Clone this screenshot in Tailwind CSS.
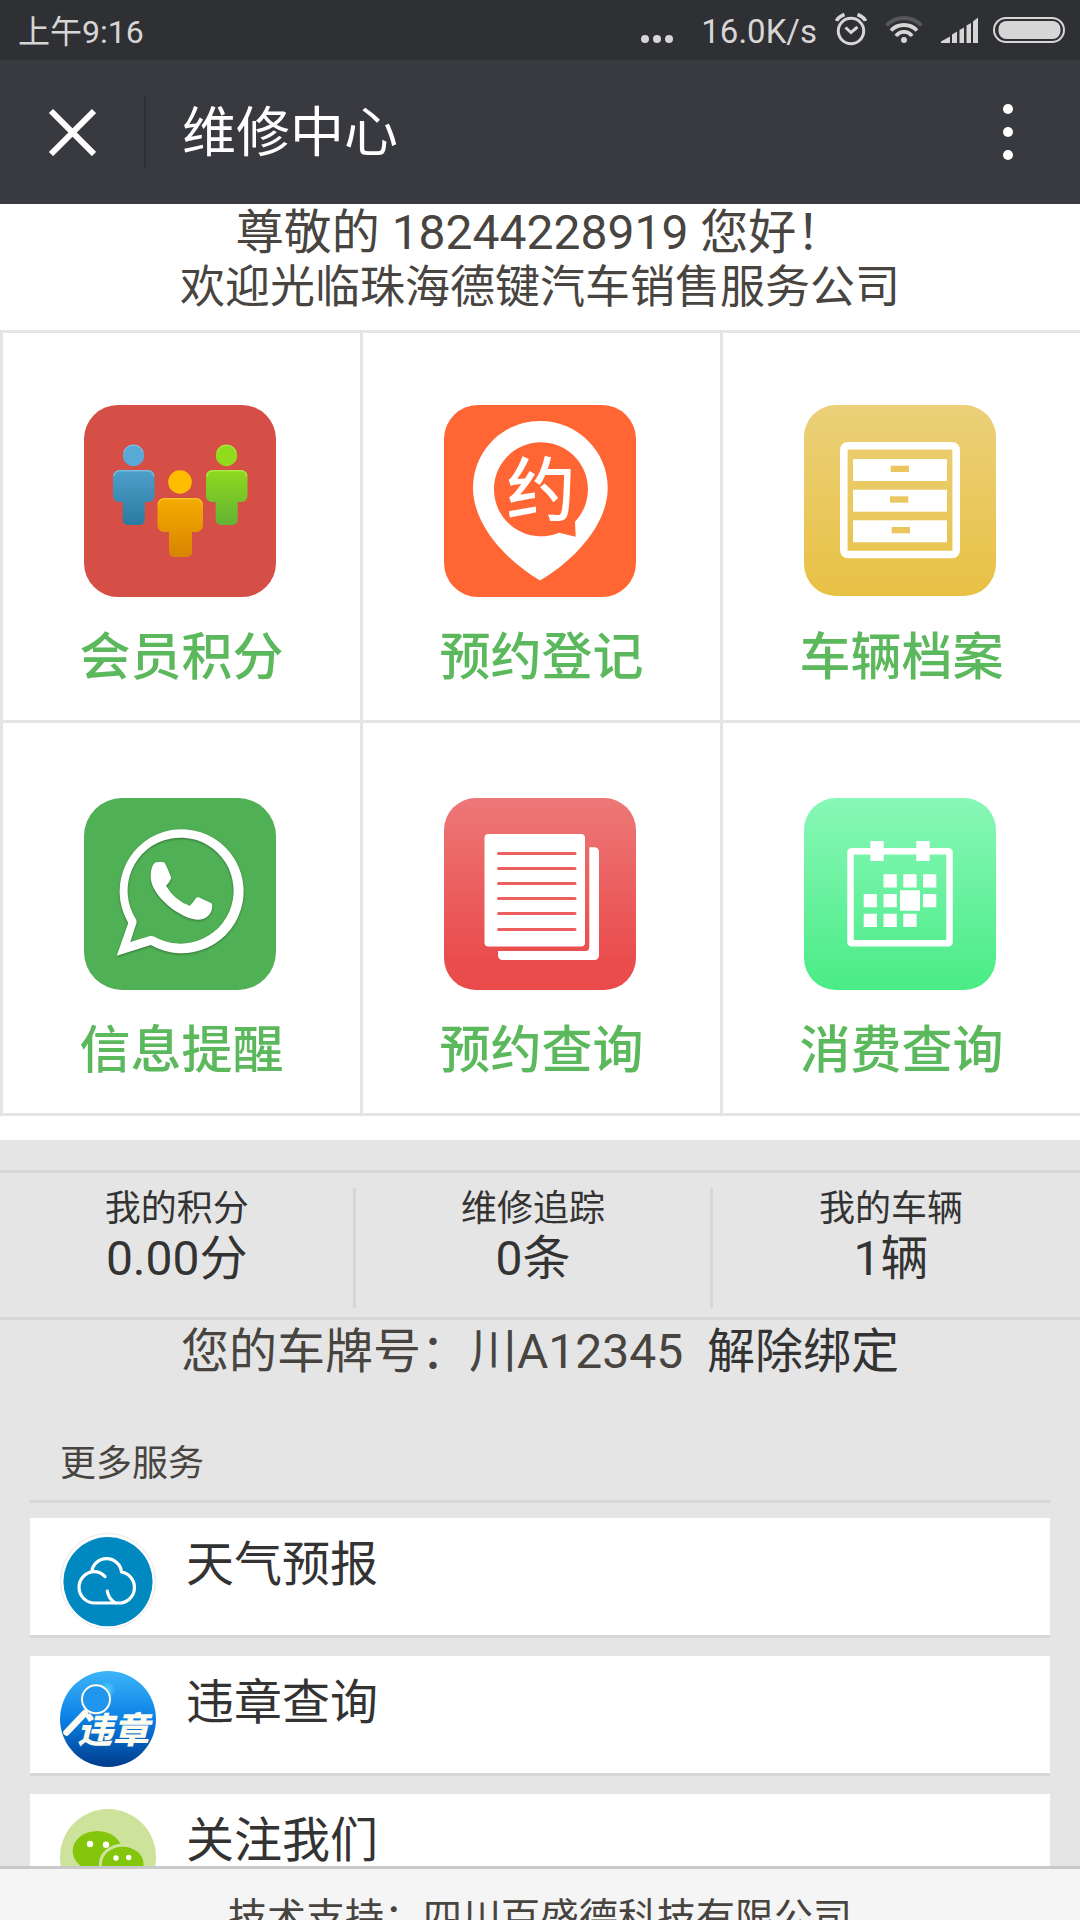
<!DOCTYPE html>
<html lang="zh-CN">
<head>
  <meta charset="UTF-8">
  <meta name="viewport" content="width=device-width, initial-scale=1.0">
  <title>维修中心</title>
  <script src="https://cdn.jsdelivr.net/npm/@tailwindcss/browser@4"></script>
</head>
<body class="flex h-screen flex-col overflow-hidden bg-[#e5e5e5] font-[Roboto,'Noto_Sans_CJK_SC',sans-serif] text-[#48443f]">

  <!-- Status bar -->
  <div class="flex h-[60px] shrink-0 items-center bg-[#2f3034] pl-[18px] pr-[15px] text-[32px] leading-[54px] text-[#d6d6d6]">
    <span class="pt-1">上午9:16</span>
    <svg class="ml-auto h-[60px] w-8" viewBox="0 0 32 60" fill="currentColor"><circle cx="4" cy="39" r="4"/><circle cx="16" cy="39" r="4"/><circle cx="28" cy="39" r="4"/></svg>
    <span class="ml-7 pt-1 text-[33px]">16.0K/s</span>
    <svg class="ml-[18px] h-[60px] w-8" viewBox="0 0 32 60" fill="none" stroke="currentColor" stroke-width="3">
      <circle cx="16" cy="31" r="12.7"/>
      <path d="M10.5 27.5l5.5 5 6.500-5.500"/>
      <path d="M1.500 21Q3 17 9.500 14.500M30.500 21Q29 17 22.500 14.500" stroke-width="3.500"/>
    </svg>
    <svg class="ml-[18px] h-[60px] w-[38px]" viewBox="0 0 38 60" fill="none" stroke="currentColor" stroke-width="3.800">
      <path d="M1.500 25.500Q9 18 19 18T36.500 25.500" stroke="#55565a"/>
      <path d="M6 30.500Q11 25 19 25T32 30.500M11 36Q14 31.800 19 31.800T27 36"/>
      <circle cx="19" cy="40" r="3" fill="currentColor" stroke="none"/>
    </svg>
    <svg class="ml-[18px] h-[60px] w-[38px]" viewBox="0 0 38 60" fill="currentColor">
      <path d="M0 43v-1.500l9-5V43zM11 43V34.500l5-3V43zM18.500 43V30l4.500-2.500V43zM25.500 43V25.500l4.500-2.500V43zM32 43V21.500l5-4V43z"/>
    </svg>
    <svg class="ml-[14px] h-[60px] w-[72px]" viewBox="0 0 72 60">
      <rect x="1" y="18" width="70" height="24" rx="12" fill="none" stroke="currentColor" stroke-width="2"/>
      <rect x="5.500" y="21" width="62" height="18" rx="8" fill="currentColor"/>
    </svg>
  </div>

  <!-- Title bar -->
  <header class="flex h-36 shrink-0 items-center bg-[#393a3f] text-white">
    <button class="flex w-36 justify-center" aria-label="关闭">
      <svg class="h-12 w-12" viewBox="0 0 48 48" stroke="currentColor" stroke-width="6"><path d="M3 3l43 43M46 3L3 46"/></svg>
    </button>
    <div class="h-[72px] w-[2px] bg-[#2f3034]"></div>
    <h1 class="ml-9 pt-1 text-[54px] leading-[72px]">维修中心</h1>
    <button class="ml-auto mr-12 flex w-12 justify-center" aria-label="菜单">
      <svg class="h-14 w-3" viewBox="0 0 12 56" fill="currentColor"><circle cx="6" cy="5" r="5"/><circle cx="6" cy="28" r="5"/><circle cx="6" cy="51" r="5"/></svg>
    </button>
  </header>

  <main class="min-h-0 flex-1 overflow-y-auto [scrollbar-width:none]">
    <section class="bg-white pb-6">
      <div class="pt-[2px] pb-[15px] text-center">
        <p class="text-[48px] leading-[54px]">尊敬的 18244228919 您好！</p>
        <p class="text-[45px] leading-[55px]">欢迎光临珠海德键汽车销售服务公司</p>
      </div>

      <nav class="grid grid-cols-3 border-t-[3px] border-[#e5e5e5] text-[51px] leading-[72px] font-medium text-[#5cb85c] font-['Noto_Sans_CJK_SC',sans-serif]">
        <a href="#" class="flex flex-col items-center border-b-[3px] border-l-[3px] border-[#e5e5e5] pt-[72px] pr-[3px] pb-[31px]">
          <svg class="h-48 w-48" viewBox="0 0 192 192">
            <defs>
              <linearGradient id="blue" x2="0" y2="1"><stop stop-color="#4f9fcb"/><stop offset="1" stop-color="#2a7ba1"/></linearGradient>
              <linearGradient id="lime" x2="0" y2="1"><stop stop-color="#8fd91e"/><stop offset="1" stop-color="#63b336"/></linearGradient>
              <linearGradient id="amber" x2="0" y2="1"><stop stop-color="#f5ac00"/><stop offset="1" stop-color="#d78400"/></linearGradient>
            </defs>
            <rect width="192" height="192" rx="34" fill="#d54f46"/>
            <circle cx="49.500" cy="50.500" r="10.700" fill="#5aa8d6"/>
            <path d="M40 47a10 10 0 0 1 19 0" fill="none" stroke="#8ecbed"/>
            <path d="M35 65h29.500a6 6 0 0 1 6 6v20a6 6 0 0 1-6 6h-3.800v18a5 5 0 0 1-5 5h-12a5 5 0 0 1-5-5V97H35a6 6 0 0 1-6-6V71a6 6 0 0 1 6-6z" fill="url(#blue)"/>
            <path d="M30 71a5 5 0 0 1 5-5.200h29.500a5 5 0 0 1 5 5.200" fill="none" stroke="#8ecbed"/>
            <circle cx="142.500" cy="50.500" r="10.700" fill="#90dc1c"/>
            <path d="M133 47a10 10 0 0 1 19 0" fill="none" stroke="#b9ef5c"/>
            <path d="M128 65h29.500a6 6 0 0 1 6 6v20a6 6 0 0 1-6 6h-3.800v18a5 5 0 0 1-5 5h-12a5 5 0 0 1-5-5V97H128a6 6 0 0 1-6-6V71a6 6 0 0 1 6-6z" fill="url(#lime)"/>
            <path d="M123 71a5 5 0 0 1 5-5.200h29.500a5 5 0 0 1 5 5.200" fill="none" stroke="#b9ef5c"/>
            <circle cx="96" cy="77" r="11.800" fill="#ffbd00"/>
            <path d="M80 93h32.500a6.500 6.500 0 0 1 6.500 6.500v21a6.500 6.500 0 0 1-6.500 6.500h-4.500v20a5 5 0 0 1-5 5H90a5 5 0 0 1-5-5v-20H80a6.500 6.500 0 0 1-6.500-6.500v-21A6.500 6.500 0 0 1 80 93z" fill="url(#amber)"/>
            <path d="M74.500 99.500A5.500 5.500 0 0 1 80 93.800h32.500a5.500 5.500 0 0 1 5.500 5.700" fill="none" stroke="#ffcf2e"/>
          </svg>
          <span class="mt-5 pl-[3px]">会员积分</span>
        </a>
        <a href="#" class="flex flex-col items-center border-b-[3px] border-l-[3px] border-[#e5e5e5] pt-[72px] pr-[3px] pb-[31px]">
          <svg class="h-48 w-48" viewBox="0 0 192 192">
            <rect width="192" height="192" rx="34" fill="#ff6633"/>
            <path d="M96 16C133.500 16 163.700 46 163.700 83C163.700 119 131 155 96 175.500C61 155 29 119 29 83C29 46 59 16 96 16z" fill="#fff"/>
            <path d="M131 116.700L131.700 131.700L115 127.700A47 47 0 1 1 131 116.700z" fill="#ff6633"/>
            <text x="97" y="110" text-anchor="middle" font-size="69" font-weight="500" fill="#fff">约</text>
          </svg>
          <span class="mt-5 pl-[3px]">预约登记</span>
        </a>
        <a href="#" class="flex flex-col items-center border-b-[3px] border-l-[3px] border-[#e5e5e5] pt-[72px] pr-[3px] pb-[31px]">
          <svg class="h-48 w-48" viewBox="0 0 192 192">
            <defs><linearGradient id="gold" x2="0" y2="1"><stop stop-color="#ebd079"/><stop offset="1" stop-color="#e8c144"/></linearGradient></defs>
            <rect width="192" height="191" rx="32" fill="url(#gold)"/>
            <rect x="39.800" y="40.800" width="112.400" height="108.700" rx="4" fill="none" stroke="#fff" stroke-width="7.600"/>
            <g fill="#fff"><rect x="49" y="54" width="94" height="22"/><rect x="49" y="84.700" width="94" height="22"/><rect x="49" y="115.300" width="94" height="22"/></g>
            <g fill="#eac75e"><rect x="86.700" y="60.700" width="18.300" height="6.300"/><rect x="86" y="91.300" width="18.300" height="6.400"/><rect x="87.700" y="122" width="18.300" height="6.300"/></g>
          </svg>
          <span class="mt-5 pl-[3px]">车辆档案</span>
        </a>
        <a href="#" class="flex flex-col items-center border-b-[3px] border-l-[3px] border-[#e5e5e5] pt-[75px] pr-[3px] pb-[31px]">
          <svg class="h-48 w-48" viewBox="0 0 192 192">
            <rect width="192" height="192" rx="38" fill="#50b055"/>
            <g class="drop-shadow-[0_1px_1px_rgba(0,0,0,0.35)]" fill="#fff">
              <path fill-rule="evenodd" d="M32.700 157.700L43.700 126.500Q44.500 125 43.500 123.500A62 62 0 1 1 66.700 147zM46.300 144L66 138Q68 137.600 70 138.500A53 53 0 1 0 51.500 120.500Q53 123 52.500 125z"/>
              <path d="M72 64.300Q76 63.500 80 64.300Q81.500 65 87.300 80Q86 84 82 87.700Q91 102.700 105.700 107.700Q108 106 112 100Q113 98.800 114.500 99.300L127 105Q128.500 106 128.300 108C128 116 123 121.700 113.300 121.700C97 121 66.700 98 66.700 79C66.700 70 69 65.500 72 64.300z"/>
            </g>
          </svg>
          <span class="mt-5 pl-[3px]">信息提醒</span>
        </a>
        <a href="#" class="flex flex-col items-center border-b-[3px] border-l-[3px] border-[#e5e5e5] pt-[75px] pr-[3px] pb-[31px]">
          <svg class="h-48 w-48" viewBox="0 0 192 192">
            <defs><linearGradient id="coral" x2="0" y2="1"><stop stop-color="#ed7777"/><stop offset=".85" stop-color="#ea4c4c"/><stop offset="1" stop-color="#ea4a4a"/></linearGradient></defs>
            <rect width="192" height="192" rx="32" fill="url(#coral)"/>
            <rect x="40.500" y="36" width="100.500" height="112.500" rx="4" fill="#fff"/>
            <path d="M145.300 49.300H150.500a4.500 4.500 0 0 1 4.500 4.500V157.500a4.500 4.500 0 0 1-4.500 4.500H58.500a4.500 4.500 0 0 1-4.500-4.500V153H141.300a4 4 0 0 0 4-4z" fill="#fff"/>
            <path d="M54.500 55.500H131M54.500 70.500H131M54.500 85.500H131M54.500 100.500H131M54.500 115.500H131M54.500 131.500H131" stroke="#eb5f5f" stroke-width="3" stroke-linecap="round"/>
          </svg>
          <span class="mt-5 pl-[3px]">预约查询</span>
        </a>
        <a href="#" class="flex flex-col items-center border-b-[3px] border-l-[3px] border-[#e5e5e5] pt-[75px] pr-[3px] pb-[31px]">
          <svg class="h-48 w-48" viewBox="0 0 192 192">
            <defs><linearGradient id="mint" x2="0" y2="1"><stop stop-color="#88f8b7"/><stop offset="1" stop-color="#4aeb86"/></linearGradient></defs>
            <rect width="192" height="192" rx="32" fill="url(#mint)"/>
            <rect x="46.500" y="53.300" width="99" height="92" rx="1" fill="none" stroke="#fff" stroke-width="6.500"/>
            <path d="M66.300 43h13.400v20H66.300zM112.300 43h13.400v20h-13.400zM79.500 76.300h13.300v13.300H79.500zM99.300 76.300h13.300v13.300H99.300zM119 76.300h13.300v13.300H119zM59.700 96H73v13.300H59.700zM79.500 96h13.300v13.300H79.500zM96 92.300h20v20.400H96zM119 96h13.300v13.300H119zM59.700 115.700H73V129H59.700zM79.500 115.700h13.300V129H79.500zM99.300 115.700h13.300V129H99.300z" fill="#fff"/>
          </svg>
          <span class="mt-5 pl-[3px]">消费查询</span>
        </a>
      </nav>
    </section>

    <!-- My account figures -->
    <section class="mt-[30px] flex border-y-[3px] border-[#d6d6d6] pt-[15px] pb-[9px] text-center text-[#333]">
      <a href="#" class="h-[120px] w-[33%] border-r-[3px] border-[#d6d6d6] pt-[3px]">
        <p class="text-[36px] leading-9">我的积分</p>
        <p class="text-[48px] leading-[64px]">0.00分</p>
      </a>
      <a href="#" class="h-[120px] w-[33%] border-r-[3px] border-[#d6d6d6] pt-[3px]">
        <p class="text-[36px] leading-9">维修追踪</p>
        <p class="text-[48px] leading-[64px]">0条</p>
      </a>
      <a href="#" class="h-[120px] w-[33%] pt-[3px]">
        <p class="text-[36px] leading-9">我的车辆</p>
        <p class="text-[48px] leading-[64px]">1辆</p>
      </a>
    </section>

    <p class="text-center text-[48px] leading-[64px]">您的车牌号：川A12345&nbsp; <a href="#" class="text-[#333]">解除绑定</a></p>

    <section class="mx-[30px] mt-11">
      <h2 class="border-b-[3px] border-[#d6d6d6] px-[30px] pt-[9px] pb-[9px] text-[36px] leading-[54px]">更多服务</h2>
      <ul class="mt-[15px] flex flex-col gap-[18px] text-[48px] leading-[64px] text-[#333]">
        <li class="border-b-[3px] border-[#d6d6d6] bg-white">
          <a href="#" class="flex items-start gap-[30px] px-[30px] pt-[15px] pb-[6px]">
            <svg class="h-24 w-24 shrink-0" viewBox="0 0 96 96" fill="none" stroke="#fff" stroke-width="3.200" stroke-linecap="round">
              <circle cx="48" cy="48" r="47.500" stroke="#e9e9e9" stroke-width="1"/>
              <circle cx="48" cy="48.700" r="44.600" fill="#0089c0" stroke="none"/>
              <path d="M45 43.500Q40 38.500 33.500 38.700A15.700 15.700 0 0 0 33.500 70H61A15.700 15.700 0 0 0 61.500 39A15 15 0 0 0 31.700 38.700M47.300 58Q48.500 66 55.500 70"/>
            </svg>
            <span>天气预报</span>
          </a>
        </li>
        <li class="border-b-[3px] border-[#d6d6d6] bg-white">
          <a href="#" class="flex items-start gap-[30px] px-[30px] pt-[15px] pb-[6px]">
            <svg class="h-24 w-24 shrink-0" viewBox="0 0 96 96">
              <defs>
                <linearGradient id="sky" x2="0" y2="1"><stop stop-color="#3db5f9"/><stop offset=".5" stop-color="#0a80e4"/><stop offset="1" stop-color="#003c8c"/></linearGradient>
                <radialGradient id="glow"><stop stop-color="#4fd0ff"/><stop offset="1" stop-color="#4fd0ff" stop-opacity="0"/></radialGradient>
              </defs>
              <circle cx="48" cy="48" r="48" fill="url(#sky)"/>
              <circle cx="47" cy="19" r="9" fill="url(#glow)"/>
              <path d="M25 42L6.500 61.500" stroke="#fdfaf0" stroke-width="6.500" stroke-linecap="round"/>
              <circle cx="36" cy="28.300" r="14" fill="#1f95ee" stroke="#fdfaf0" stroke-width="2"/>
              <text x="17" y="72" font-size="36" font-weight="900" font-style="italic" fill="#fdfaf0" class="font-['Noto_Sans_CJK_SC',sans-serif]">违章</text>
            </svg>
            <span>违章查询</span>
          </a>
        </li>
        <li class="border-b-[3px] border-[#d6d6d6] bg-white">
          <a href="#" class="flex items-start gap-[30px] px-[30px] pt-[15px] pb-[6px]">
            <svg class="h-24 w-24 shrink-0" viewBox="0 0 96 96">
              <circle cx="48" cy="48" r="48" fill="#cde29b"/>
              <ellipse cx="37.300" cy="42" rx="24.600" ry="20" fill="#84c60b"/>
              <path d="M22 56l-3 9 10-5z" fill="#84c60b"/>
              <ellipse cx="62.700" cy="55" rx="22.300" ry="18.800" fill="#84c60b" stroke="#cde29b" stroke-width="3"/>
              <path d="M70 70l8 5-2-9z" fill="#84c60b"/>
              <g fill="#fff"><circle cx="30" cy="35" r="3.200"/><circle cx="46" cy="35.700" r="3.200"/><circle cx="56" cy="49" r="2.700"/><circle cx="68.700" cy="48.500" r="2.700"/></g>
            </svg>
            <span>关注我们</span>
          </a>
        </li>
      </ul>
    </section>
  </main>

  <footer class="h-[54px] shrink-0 overflow-hidden border-t-[3px] border-[#c9c9c9] bg-[#f6f5f6] pt-[21px] text-center text-[39px] leading-[57px]">技术支持：四川百盛德科技有限公司</footer>
</body>
</html>
